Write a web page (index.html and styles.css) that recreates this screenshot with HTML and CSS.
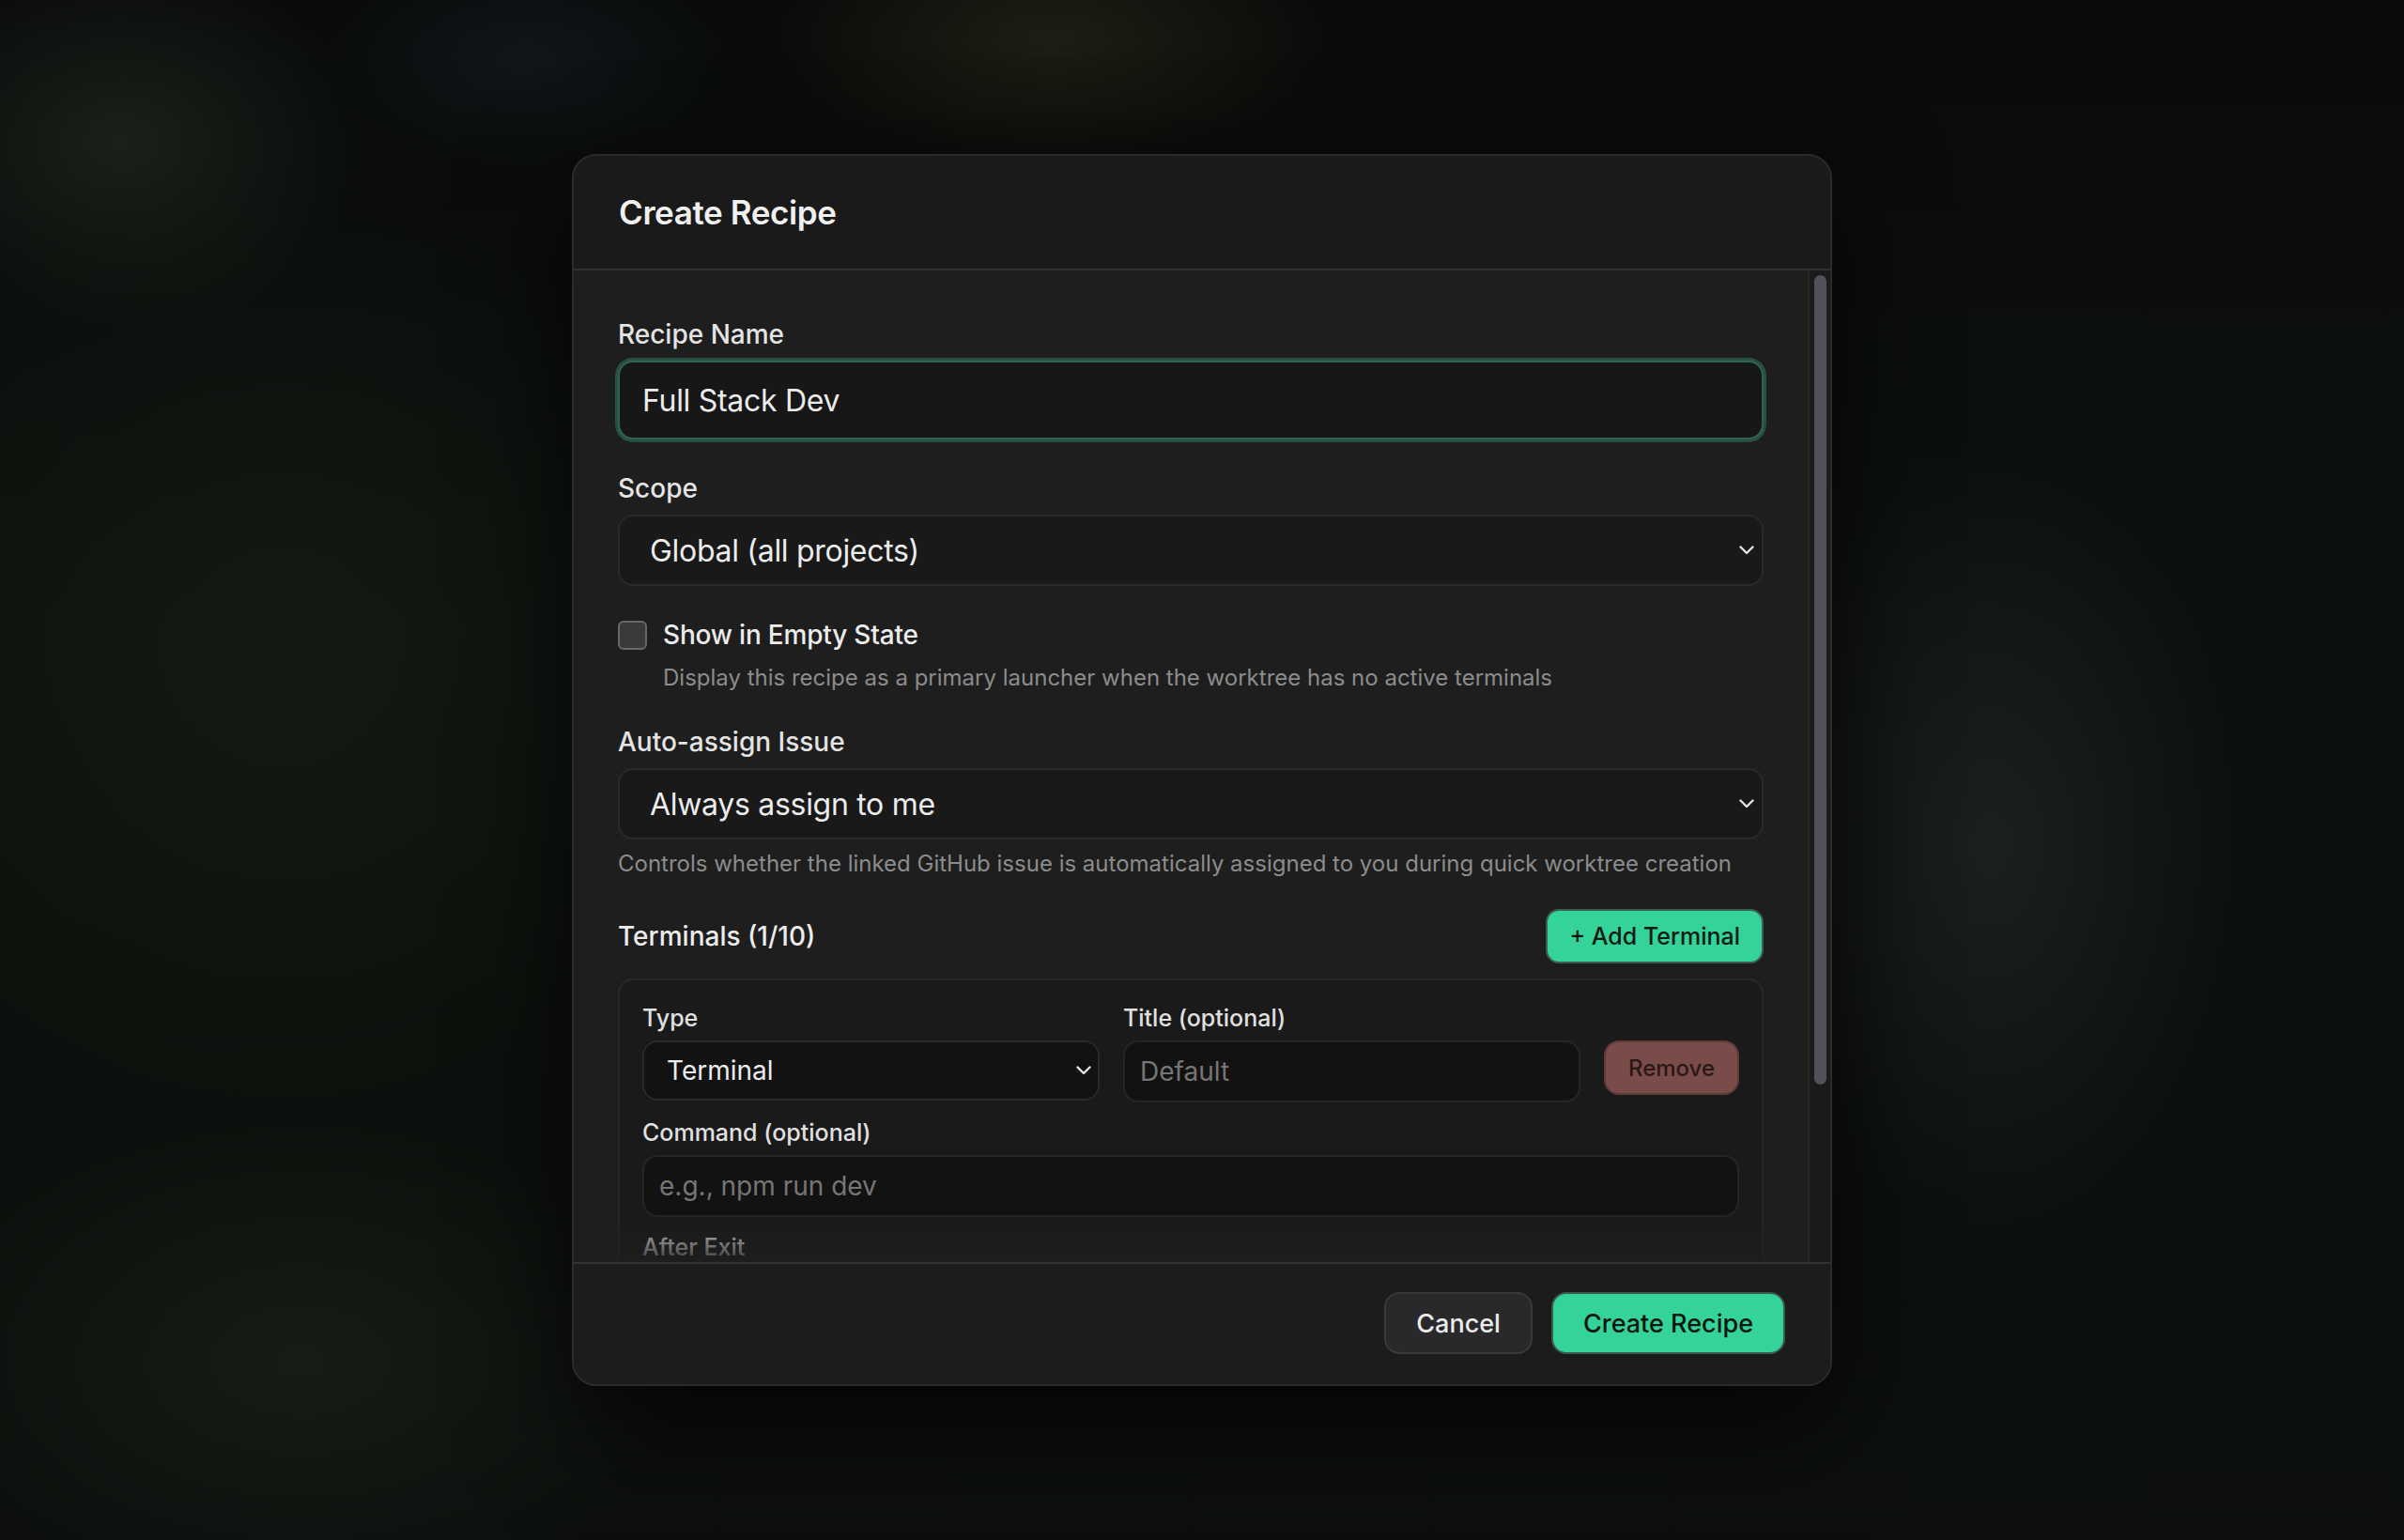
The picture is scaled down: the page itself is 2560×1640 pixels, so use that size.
FILE: index.html
```html
<!DOCTYPE html>
<html lang="en">
<head>
	<meta charset="UTF-8">
	<title>Create Recipe</title>
	<link rel="stylesheet" href="styles.css">
</head>
<body>
	<div class="backdrop">
		<div class="modal">
			<div class="modal-header">
				<h2 class="modal-title">Create Recipe</h2>
			</div>

			<div class="body-wrap">
				<div class="modal-body">
					<div class="field">
						<label class="label">Recipe Name</label>
						<input class="input input-focus" type="text" value="Full Stack Dev">
					</div>

					<div class="field">
						<label class="label">Scope</label>
						<div class="select">
							<span>Global (all projects)</span>
							<svg class="chev" width="16" height="10" viewBox="0 0 16 10"><path d="M1.5 1.5 L8 8 L14.5 1.5" fill="none" stroke="currentColor" stroke-width="2.4" stroke-linecap="round" stroke-linejoin="round"/></svg>
						</div>
					</div>

					<div class="field">
						<div class="check-row">
							<span class="checkbox"></span>
							<span class="check-label">Show in Empty State</span>
						</div>
						<p class="hint indent">Display this recipe as a primary launcher when the worktree has no active terminals</p>
					</div>

					<div class="field">
						<label class="label">Auto-assign Issue</label>
						<div class="select">
							<span>Always assign to me</span>
							<svg class="chev" width="16" height="10" viewBox="0 0 16 10"><path d="M1.5 1.5 L8 8 L14.5 1.5" fill="none" stroke="currentColor" stroke-width="2.4" stroke-linecap="round" stroke-linejoin="round"/></svg>
						</div>
						<p class="hint">Controls whether the linked GitHub issue is automatically assigned to you during quick worktree creation</p>
					</div>

					<div class="terminals">
						<div class="terminals-head">
							<span class="terminals-title">Terminals (1/10)</span>
							<button class="btn-add">+ Add Terminal</button>
						</div>

						<div class="card">
							<div class="card-row">
								<div class="col">
									<label class="small-label">Type</label>
									<div class="select select-sm">
										<span>Terminal</span>
										<svg class="chev" width="16" height="10" viewBox="0 0 16 10"><path d="M1.5 1.5 L8 8 L14.5 1.5" fill="none" stroke="currentColor" stroke-width="2.4" stroke-linecap="round" stroke-linejoin="round"/></svg>
									</div>
								</div>
								<div class="col">
									<label class="small-label">Title (optional)</label>
									<input class="input-sm" type="text" placeholder="Default">
								</div>
								<button class="btn-remove">Remove</button>
							</div>

							<div class="card-field">
								<label class="small-label">Command (optional)</label>
								<input class="input-sm" type="text" placeholder="e.g., npm run dev">
							</div>

							<div class="card-field">
								<label class="small-label">After Exit</label>
							</div>
						</div>
					</div>
				</div>
				<div class="scrollbar"><div class="thumb"></div></div>
				<div class="fade"></div>
			</div>

			<div class="modal-footer">
				<button class="btn-cancel">Cancel</button>
				<button class="btn-primary">Create Recipe</button>
			</div>
		</div>
	</div>
</body>
</html>
```

FILE: styles.css
```css
* { box-sizing: border-box; }
html, body { margin: 0; height: 100%; }
body {
	font-family: Inter, "Noto Sans", "Liberation Sans", sans-serif;
	color: #e6e6e6;
	background-color: #0b0e0b;
	background-image:
		radial-gradient(ellipse 260px 200px at 130px 150px, rgba(40,48,38,0.55), transparent),
		radial-gradient(ellipse 300px 140px at 1120px 40px, rgba(54,52,30,0.45), transparent),
		radial-gradient(ellipse 220px 120px at 560px 60px, rgba(30,40,52,0.35), transparent),
		radial-gradient(ellipse 260px 420px at 2120px 900px, rgba(44,48,46,0.5), transparent),
		radial-gradient(ellipse 420px 260px at 320px 1450px, rgba(34,40,32,0.5), transparent),
		radial-gradient(ellipse 500px 500px at 300px 700px, rgba(26,32,24,0.55), transparent),
		linear-gradient(180deg, #090b0a 0%, #0d110d 40%, #0c0f0c 100%);
}

.backdrop { height: 100%; display: flex; align-items: center; justify-content: center; }

.modal {
	width: 1342px;
	height: 1312px;
	display: flex;
	flex-direction: column;
	background: #1c1c1c;
	border: 2px solid #2b2b2b;
	border-radius: 26px;
	overflow: hidden;
	box-shadow: 0 40px 120px rgba(0,0,0,0.7);
}

.modal-header { padding: 32px 48px; background: #1a1a1a; border-bottom: 2px solid #313131; }
.modal-title { margin: 0; font-size: 35px; line-height: 56px; font-weight: 600; color: #f0f0f0; letter-spacing: -0.4px; }

.body-wrap { flex: 1; min-height: 0; display: flex; position: relative; background: #1e1e1e; }
.modal-body {
	flex: 1;
	min-width: 0;
	overflow: hidden;
	padding: 48px 47px 150px 47px;
	display: flex;
	flex-direction: column;
	gap: 32px;
}
.scrollbar {
	width: 24px;
	flex-shrink: 0;
	background: #1b1b1b;
	border-left: 2px solid #242424;
	padding: 5px 4px 0 5px;
}
.thumb { height: 862px; background: #52525b; border-radius: 8px; }
.fade {
	position: absolute; left: 0; right: 24px; bottom: 0; height: 52px;
	background: linear-gradient(180deg, rgba(30,30,30,0) 0%, rgba(30,30,30,0.85) 100%);
	pointer-events: none;
}

.field { display: flex; flex-direction: column; }
.label { font-size: 28px; line-height: 40px; font-weight: 500; color: #e4e4e4; margin-bottom: 8px; }

.input {
	height: 84px;
	padding: 0 24px;
	font: inherit;
	font-size: 32px;
	letter-spacing: -0.3px;
	color: #ececec;
	background: #171717;
	border: 2px solid #2a2a2a;
	border-radius: 16px;
	outline: none;
}
.input-focus { border-color: #2f6452; box-shadow: 0 0 0 3px #28503f; }

.select {
	height: 76px;
	display: flex;
	align-items: center;
	justify-content: space-between;
	padding: 0 8px 0 32px;
	font-size: 32px;
	letter-spacing: -0.3px;
	color: #ececec;
	background: #191919;
	border: 2px solid #2a2a2a;
	border-radius: 16px;
}
.chev { color: #e6e6e6; flex-shrink: 0; }

.check-row { display: flex; align-items: center; gap: 17px; height: 40px; }
.checkbox { width: 31px; height: 31px; border-radius: 6px; background: #3a3a3a; border: 2px solid #686868; }
.check-label { font-size: 28px; font-weight: 500; color: #ececec; letter-spacing: -0.2px; }

.hint { margin: 10px 0 0; font-size: 24px; line-height: 32px; color: #8c8c8c; }
.indent { margin-left: 48px; }

.terminals { display: flex; flex-direction: column; gap: 16px; }
.terminals-head { display: flex; align-items: center; justify-content: space-between; }
.terminals-title { font-size: 28px; font-weight: 500; color: #ececec; }
.btn-add {
	height: 58px;
	padding: 0 23px;
	font: inherit;
	font-size: 25px;
	font-weight: 500;
	color: #0c1a13;
	background: #34d399;
	border: 2px solid #3f5c50;
	border-radius: 14px;
}

.card { background: #1a1a1a; border: 2px solid #292929; border-radius: 16px; padding: 24px; }
.card-row { display: flex; align-items: flex-start; gap: 25px; }
.col { flex: 1; display: flex; flex-direction: column; }
.card-field { display: flex; flex-direction: column; margin-top: 16px; }
.small-label { font-size: 25px; line-height: 32px; font-weight: 500; color: #e0e0e0; margin-bottom: 8px; }

.select-sm {
	height: 64px;
	padding: 0 7px 0 24px;
	font-size: 28px;
	letter-spacing: 0;
	background: #121212;
	border-color: #292929;
}
.input-sm {
	height: 66px;
	padding: 0 16px;
	font: inherit;
	font-size: 28px;
	color: #ececec;
	background: #121212;
	border: 2px solid #262626;
	border-radius: 16px;
	outline: none;
}
.input-sm::placeholder { color: #767676; }

.btn-remove {
	margin-top: 40px;
	height: 58px;
	padding: 0 24px;
	font: inherit;
	font-size: 24px;
	font-weight: 500;
	color: #2a1817;
	background: #7a4c49;
	border: 2px solid #5c3b39;
	border-radius: 16px;
}

.modal-footer {
	display: flex;
	justify-content: flex-end;
	gap: 20px;
	padding: 30px 48px 32px;
	background: #1c1c1c;
	border-top: 2px solid #333;
}
.btn-cancel, .btn-primary {
	height: 66px;
	padding: 0 32px;
	font: inherit;
	font-size: 27px;
	font-weight: 500;
	border-radius: 16px;
}
.btn-cancel { color: #ececec; background: #29292b; border: 2px solid #39393b; }
.btn-primary { color: #0b1610; background: #34d399; border: 2px solid #3a5a4d; }
```
